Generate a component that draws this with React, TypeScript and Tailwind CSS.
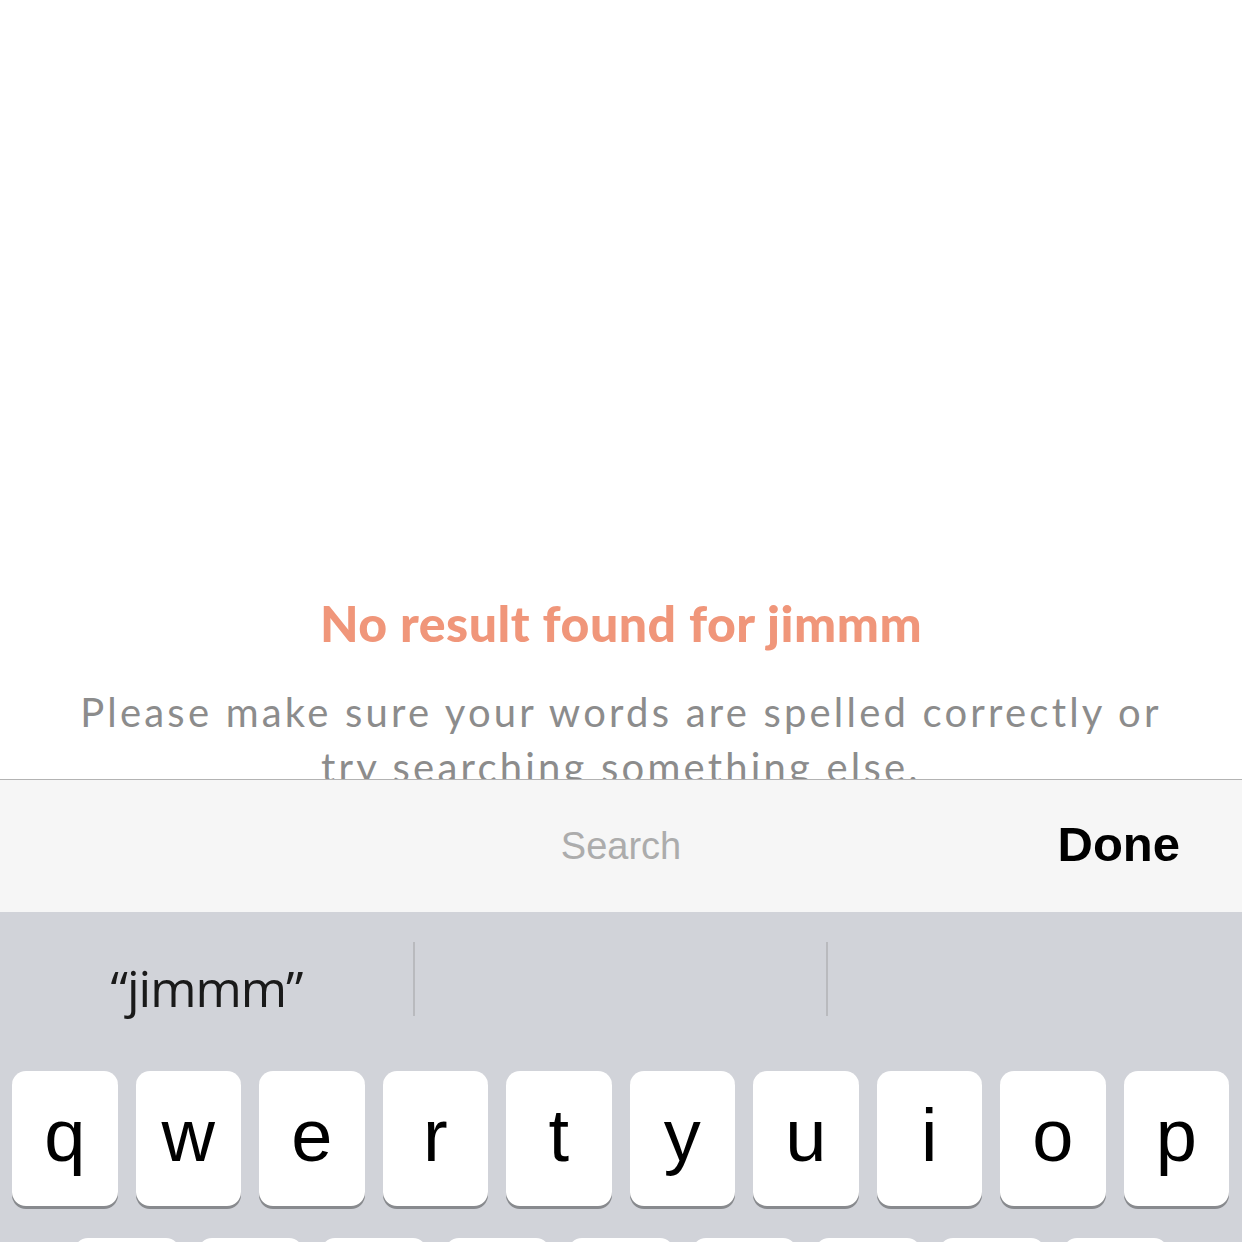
import React from "react";

const row1 = ["q", "w", "e", "r", "t", "y", "u", "i", "o", "p"];
const row2 = ["a", "s", "d", "f", "g", "h", "j", "k", "l"];

function Key({ k }: { k: string }) {
  return (
    <div className="flex-1 h-[135px] bg-white rounded-[14px] shadow-[0_3px_0_#888a8e] flex items-center justify-center">
      <span
        className="text-[74px] leading-none text-black -mt-[6px]"
        style={{ fontFamily: '"Liberation Sans", Arial, sans-serif' }}
      >
        {k}
      </span>
    </div>
  );
}

export default function App() {
  return (
    <div className="w-[1242px] h-[1242px] overflow-hidden flex flex-col bg-white">
      <div
        className="h-[779px] shrink-0 overflow-hidden flex flex-col items-center pt-[592px]"
        style={{ fontFamily: 'Lato, "Noto Sans", sans-serif' }}
      >
        <h1 className="text-[50px] font-black leading-[62px] text-[#f0967a] whitespace-nowrap tracking-[0.5px]">
          No result found for jimmm
        </h1>
        <p className="mt-[31px] text-[40px] leading-[55px] text-[#8c8c8c] text-center w-[1120px] tracking-[3.2px]">
          Please make sure your words are spelled correctly or try searching something else.
        </p>
      </div>
      <div
        className="h-[133px] shrink-0 border-t border-[#b3b3b3] bg-[#f6f6f6] relative flex items-center justify-center"
        style={{ fontFamily: '"Liberation Sans", Arial, sans-serif' }}
      >
        <span className="text-[38px] text-[#acacac]">Search</span>
        <span className="absolute right-[62px] top-[40px] text-[49px] font-bold text-black leading-none">
          Done
        </span>
      </div>
      <div className="flex-1 bg-[#d1d3d9] flex flex-col">
        <div className="h-[159px] shrink-0 flex items-start pt-[30px]">
          <div className="w-[413px] h-[74px] flex items-center justify-center">
            <span
              className="text-[50px] text-[#1a1a1a] leading-none mt-[18px] tracking-[-1px]"
              style={{ fontFamily: '"Open Sans", sans-serif' }}
            >
              “jimmm”
            </span>
          </div>
          <div className="w-[2px] h-[74px] bg-[#b9babe]" />
          <div className="w-[411px] h-[74px]" />
          <div className="w-[2px] h-[74px] bg-[#b9babe]" />
        </div>
        <div className="flex gap-[18px] pl-[12px] pr-[13px]">
          {row1.map((k) => (
            <Key key={k} k={k} />
          ))}
        </div>
        <div className="flex gap-[18px] pl-[74px] pr-[74px] mt-[32px]">
          {row2.map((k) => (
            <Key key={k} k={k} />
          ))}
        </div>
      </div>
    </div>
  );
}
